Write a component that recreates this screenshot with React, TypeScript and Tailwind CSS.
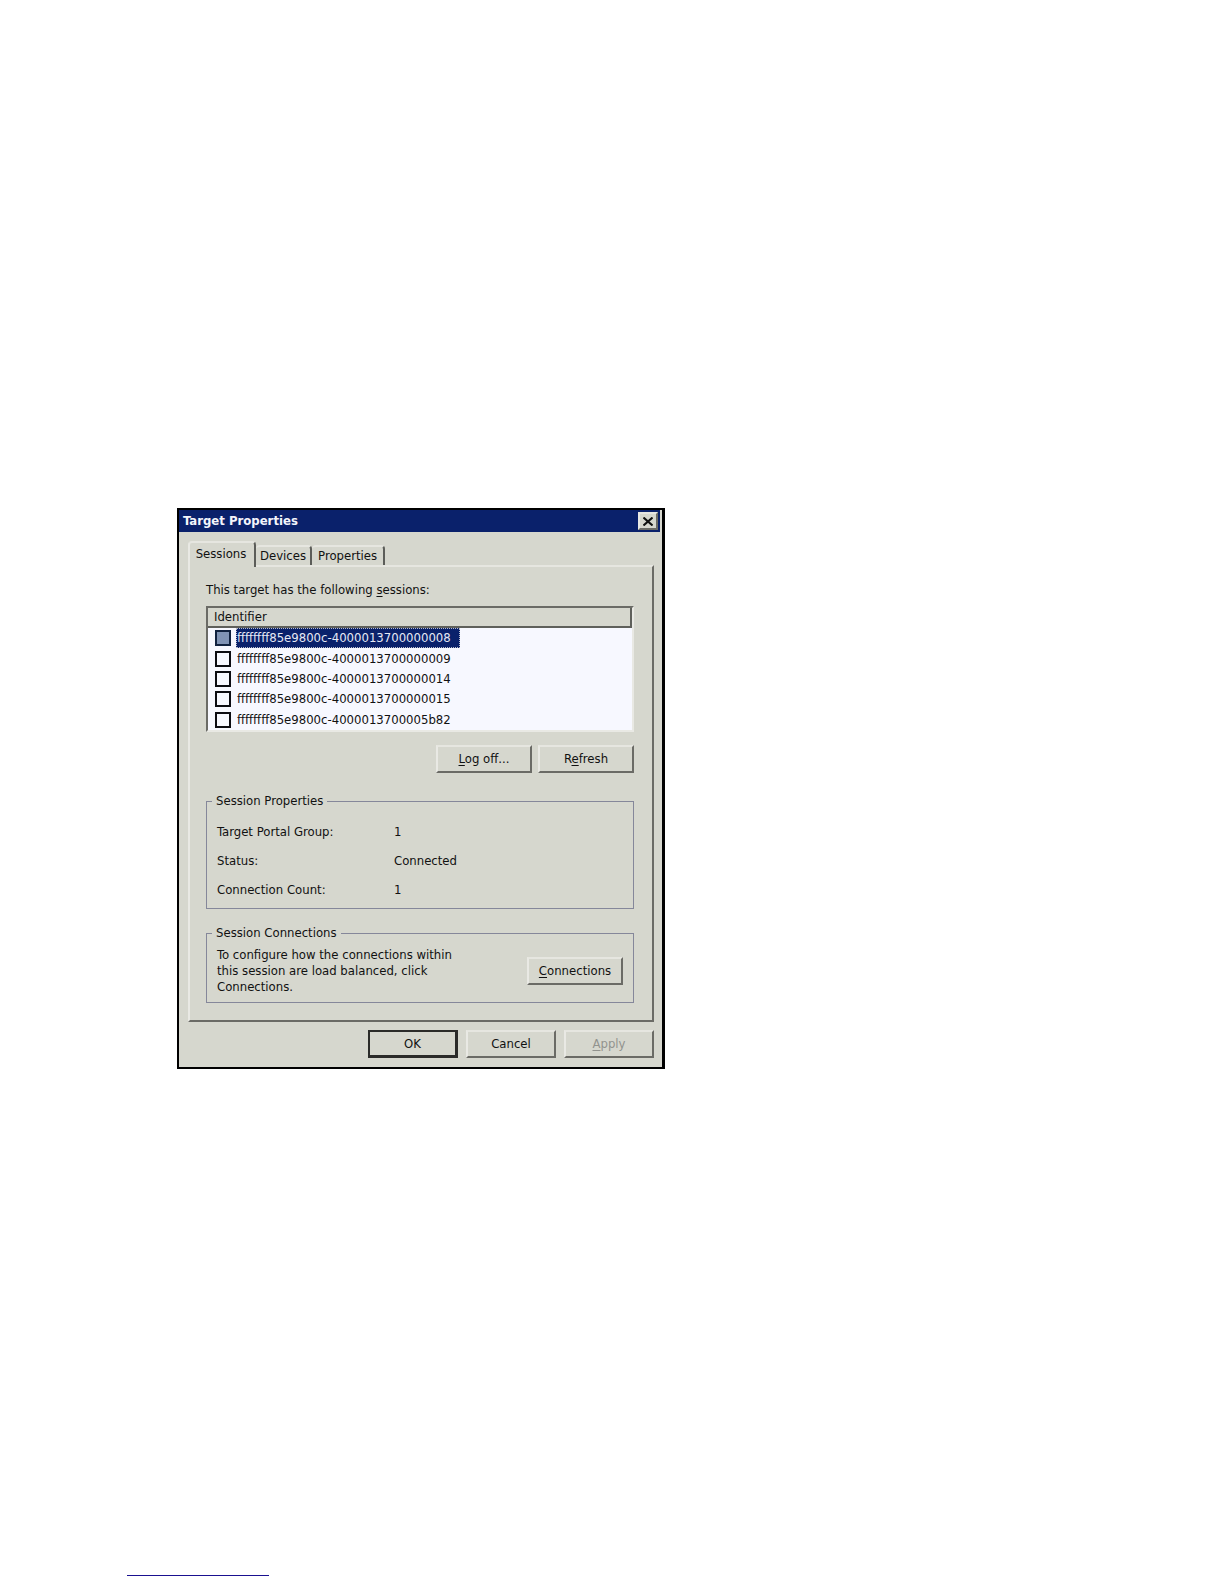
import { useState } from 'react';
import type { ReactNode } from 'react';
import clsx from 'clsx';

const SESSIONS = [
    'ffffffff85e9800c-4000013700000008',
    'ffffffff85e9800c-4000013700000009',
    'ffffffff85e9800c-4000013700000014',
    'ffffffff85e9800c-4000013700000015',
    'ffffffff85e9800c-4000013700005b82',
];

const PROPERTIES = [
    { label: 'Target Portal Group:', value: '1' },
    { label: 'Status:', value: 'Connected' },
    { label: 'Connection Count:', value: '1' },
];

const RAISED = 'border-2 border-t-[#e6e6e0] border-l-[#e9e9e4] border-r-[#6b6b66] border-b-[#6b6b66]';

// Underlined access key letter
function Key({ children }: { children: ReactNode }) {
    return <span className="underline underline-offset-2">{children}</span>;
}

type ButtonProps = {
    children: ReactNode;
    className?: string;
    disabled?: boolean;
};

function DialogButton({ children, className, disabled }: ButtonProps) {
    return (
        <button
            type="button"
            disabled={disabled}
            className={clsx(
                'flex h-7 items-center justify-center bg-[#d6d7ce]',
                disabled && 'text-[#92938e]',
                className
            )}
        >
            <span>{children}</span>
        </button>
    );
}

function Tab({ label, active }: { label: string; active?: boolean }) {
    return (
        <button
            type="button"
            role="tab"
            aria-selected={!!active}
            className={clsx(
                'rounded-t-sm border-t-2 border-r-2 border-t-[#e6e6e0] border-r-[#5c5d59] bg-[#d6d7ce]',
                active
                    ? '-mb-0.5 h-[26px] w-[68px] border-l-2 border-l-[#e9e9e4] pr-0.5 pb-0.5'
                    : 'h-5 px-1 leading-4 last:px-1.5'
            )}
        >
            {label}
        </button>
    );
}

function SessionList() {
    const [selected, setSelected] = useState(0);

    return (
        <div className="border-2 border-t-[#6b6b66] border-r-[#e9e9e4] border-b-[#e9e9e4] border-l-[#6b6b66] bg-[#f7f8ff]">
            <table className="h-[122px] w-full border-separate border-spacing-0 text-left">
                <thead>
                    <tr className="h-5">
                        <th className="border-r-2 border-b-2 border-[#5f605b] bg-[#d6d7ce] p-0 pl-1.5 leading-[18px] font-normal">
                            Identifier
                        </th>
                    </tr>
                </thead>
                <tbody>
                    {SESSIONS.map((id, i) => (
                        <tr key={id} onClick={() => setSelected(i)}>
                            <td className="p-0 pl-[7px]">
                                <label className="flex items-center gap-[5px]">
                                    <input
                                        type="checkbox"
                                        className={clsx(
                                            'size-4 appearance-none border-2',
                                            i === selected
                                                ? 'border-[#10213f] bg-[#8093b5]'
                                                : 'border-[#0c0c12] bg-[#f7f8ff]'
                                        )}
                                    />
                                    <span
                                        className={clsx(
                                            'h-5 border border-dotted pr-2 leading-[18px]',
                                            i === selected
                                                ? 'border-[#b9bccb] bg-[#0a216b] text-[#e6e9f5]'
                                                : 'border-transparent'
                                        )}
                                    >
                                        {id}
                                    </span>
                                </label>
                            </td>
                        </tr>
                    ))}
                </tbody>
            </table>
        </div>
    );
}

function TargetProperties() {
    return (
        <div
            role="dialog"
            aria-labelledby="dialog-title"
            className="w-[488px] border-2 border-r-[3px] border-black bg-[#d6d7ce] pb-[9px] text-[#111]"
        >
            {/* Title bar */}
            <div className="mr-0.5 flex h-[22px] items-center justify-between bg-[#0a216b] pr-0.5 pl-1">
                <h1 id="dialog-title" className="text-[13px] font-bold text-[#f4f5fb]">
                    Target Properties
                </h1>
                <button
                    type="button"
                    aria-label="Close"
                    className={clsx('flex h-[18px] w-5 items-center justify-center bg-[#d6d7ce]', RAISED)}
                >
                    <svg viewBox="0 0 10 9" className="h-[9px] w-2.5" fill="none" stroke="#111" strokeWidth="2">
                        <path d="M0.5 0.5L9.5 8.5M9.5 0.5L0.5 8.5" />
                    </svg>
                </button>
            </div>

            <div className="pt-2 pr-2 pl-[9px]">
                {/* Tabs */}
                <div role="tablist" className="relative flex h-[25px] items-end">
                    <Tab label="Sessions" active />
                    <Tab label="Devices" />
                    <Tab label="Properties" />
                </div>

                {/* Sessions page */}
                <div role="tabpanel" className={clsx('pt-[13px] pr-[18px] pb-[17px] pl-4', RAISED)}>
                    <p className="mb-1.5 h-5 leading-5">
                        This target has the following <Key>s</Key>essions:
                    </p>
                    <SessionList />

                    <div className="mt-[13px] flex justify-end gap-1.5">
                        <DialogButton className={clsx('w-24', RAISED)}>
                            <Key>L</Key>og off...
                        </DialogButton>
                        <DialogButton className={clsx('w-24', RAISED)}>
                            R<Key>e</Key>fresh
                        </DialogButton>
                    </div>

                    <fieldset className="mt-5 h-[116px] border border-[#85879a] px-2.5">
                        <legend className="-ml-[5px] px-1 leading-4">Session Properties</legend>
                        <dl className="pt-2">
                            {PROPERTIES.map(({ label, value }) => (
                                <div key={label} className="flex h-[29px] items-center">
                                    <dt className="w-[177px]">{label}</dt>
                                    <dd>{value}</dd>
                                </div>
                            ))}
                        </dl>
                    </fieldset>

                    <fieldset className="mt-4 h-[78px] border border-[#85879a] px-2.5">
                        <legend className="-ml-[5px] px-1 leading-4">Session Connections</legend>
                        <div className="flex items-center justify-between pt-1.5">
                            <p className="w-[244px] leading-4">
                                To configure how the connections within this session are load balanced, click
                                Connections.
                            </p>
                            <DialogButton className={clsx('w-24', RAISED)}>
                                <Key>C</Key>onnections
                            </DialogButton>
                        </div>
                    </fieldset>
                </div>

                {/* Footer */}
                <div className="mt-2 flex justify-end gap-2">
                    <DialogButton className="w-[90px] border-2 border-r-[3px] border-b-[3px] border-[#2b2b29]">
                        OK
                    </DialogButton>
                    <DialogButton className={clsx('w-[90px]', RAISED)}>Cancel</DialogButton>
                    <DialogButton className={clsx('w-[90px]', RAISED)} disabled>
                        <Key>A</Key>pply
                    </DialogButton>
                </div>
            </div>
        </div>
    );
}

export default function App() {
    return (
        <main className="flex min-h-screen flex-col bg-white pt-[508px] pb-2 pl-[127px] font-['DejaVu_Sans_Condensed','DejaVu_Sans',sans-serif] text-[13px]">
            <div className="pl-[50px]">
                <TargetProperties />
            </div>
            <hr className="mt-auto w-[142px] border-t border-[#1a1190]" />
        </main>
    );
}
